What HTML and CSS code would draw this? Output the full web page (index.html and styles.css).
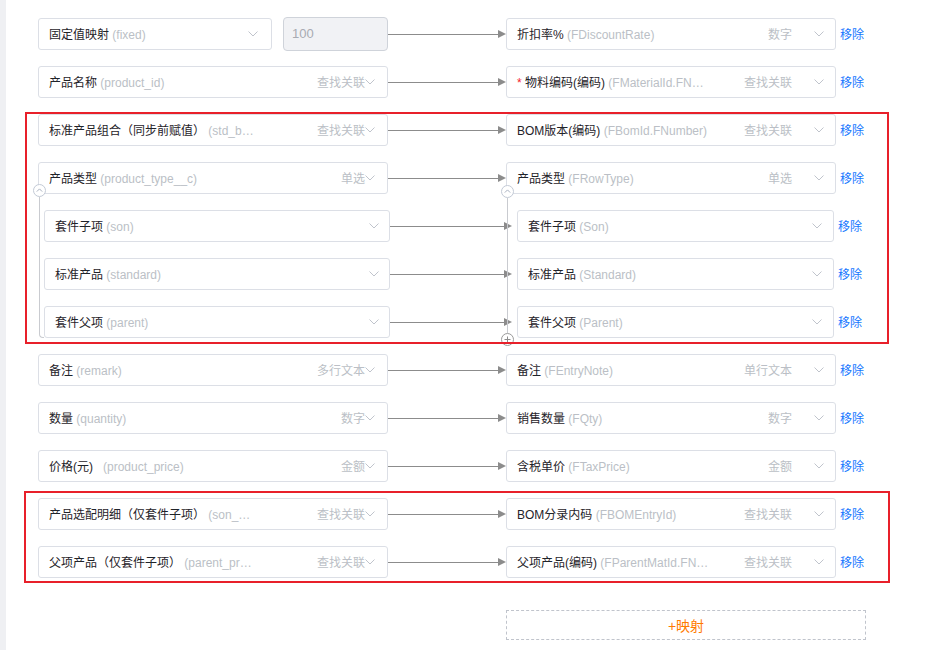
FILE: index.html
```html
<!DOCTYPE html>
<html lang="zh-CN">
<head>
<meta charset="utf-8">
<title>字段映射</title>
<link rel="stylesheet" href="styles.css">
</head>
<body>
<div class="page">
  <div class="mapping">

    <div class="row">
      <div class="src src-fixed">
        <div class="select sel-fixed"><span class="label">固定值映射 <span class="code">(fixed)</span></span><span class="fill"></span><svg class="chev" viewBox="0 0 10 6"><path d="M0.5 0.5 L5 5 L9.5 0.5"/></svg></div>
        <div class="input">100</div>
      </div>
      <div class="link"><i class="line"></i><i class="head"></i></div>
      <div class="select dst"><span class="label">折扣率% <span class="code">(FDiscountRate)</span></span><span class="fill"></span><span class="type">数字</span><svg class="chev" viewBox="0 0 10 6"><path d="M0.5 0.5 L5 5 L9.5 0.5"/></svg></div>
      <a class="remove">移除</a>
    </div>

    <div class="row">
      <div class="select src"><span class="label">产品名称 <span class="code">(product_id)</span></span><span class="fill"></span><span class="type">查找关联</span><svg class="chev" viewBox="0 0 10 6"><path d="M0.5 0.5 L5 5 L9.5 0.5"/></svg></div>
      <div class="link"><i class="line"></i><i class="head"></i></div>
      <div class="select dst"><span class="label"><span class="req">*</span> 物料编码(编码) <span class="code">(FMaterialId.FN…</span></span><span class="fill"></span><span class="type">查找关联</span><svg class="chev" viewBox="0 0 10 6"><path d="M0.5 0.5 L5 5 L9.5 0.5"/></svg></div>
      <a class="remove">移除</a>
    </div>

    <div class="mark mark-a">
      <div class="row">
        <div class="select src"><span class="label">标准产品组合（同步前赋值） <span class="code">(std_b…</span></span><span class="fill"></span><span class="type">查找关联</span><svg class="chev" viewBox="0 0 10 6"><path d="M0.5 0.5 L5 5 L9.5 0.5"/></svg></div>
        <div class="link"><i class="line"></i><i class="head"></i></div>
        <div class="select dst"><span class="label">BOM版本(编码) <span class="code">(FBomId.FNumber)</span></span><span class="fill"></span><span class="type">查找关联</span><svg class="chev" viewBox="0 0 10 6"><path d="M0.5 0.5 L5 5 L9.5 0.5"/></svg></div>
        <a class="remove">移除</a>
      </div>

      <div class="tree">
        <div class="row">
          <div class="select src"><span class="label">产品类型 <span class="code">(product_type__c)</span></span><span class="fill"></span><span class="type">单选</span><svg class="chev" viewBox="0 0 10 6"><path d="M0.5 0.5 L5 5 L9.5 0.5"/></svg></div>
          <div class="link"><i class="line"></i><i class="head"></i></div>
          <div class="select dst"><span class="label">产品类型 <span class="code">(FRowType)</span></span><span class="fill"></span><span class="type">单选</span><svg class="chev" viewBox="0 0 10 6"><path d="M0.5 0.5 L5 5 L9.5 0.5"/></svg></div>
          <a class="remove">移除</a>
        </div>

        <div class="row child">
          <div class="select src"><span class="label">套件子项 <span class="code">(son)</span></span><span class="fill"></span><svg class="chev" viewBox="0 0 10 6"><path d="M0.5 0.5 L5 5 L9.5 0.5"/></svg></div>
          <div class="link"><i class="line"></i><i class="head"></i></div>
          <div class="select dst"><span class="label">套件子项 <span class="code">(Son)</span></span><span class="fill"></span><svg class="chev" viewBox="0 0 10 6"><path d="M0.5 0.5 L5 5 L9.5 0.5"/></svg></div>
          <a class="remove">移除</a>
        </div>

        <div class="row child">
          <div class="select src"><span class="label">标准产品 <span class="code">(standard)</span></span><span class="fill"></span><svg class="chev" viewBox="0 0 10 6"><path d="M0.5 0.5 L5 5 L9.5 0.5"/></svg></div>
          <div class="link"><i class="line"></i><i class="head"></i></div>
          <div class="select dst"><span class="label">标准产品 <span class="code">(Standard)</span></span><span class="fill"></span><svg class="chev" viewBox="0 0 10 6"><path d="M0.5 0.5 L5 5 L9.5 0.5"/></svg></div>
          <a class="remove">移除</a>
        </div>

        <div class="row child">
          <div class="select src"><span class="label">套件父项 <span class="code">(parent)</span></span><span class="fill"></span><svg class="chev" viewBox="0 0 10 6"><path d="M0.5 0.5 L5 5 L9.5 0.5"/></svg></div>
          <div class="link"><i class="line"></i><i class="head"></i></div>
          <div class="select dst"><span class="label">套件父项 <span class="code">(Parent)</span></span><span class="fill"></span><svg class="chev" viewBox="0 0 10 6"><path d="M0.5 0.5 L5 5 L9.5 0.5"/></svg></div>
          <a class="remove">移除</a>
        </div>

        <span class="bracket-left"></span>
        <span class="bracket-right"></span>
        <span class="toggle toggle-left"><svg viewBox="0 0 13 13"><path d="M3.8 7.6 L6.5 4.9 L9.2 7.6"/></svg></span>
        <span class="toggle toggle-right"><svg viewBox="0 0 13 13"><path d="M3.8 7.6 L6.5 4.9 L9.2 7.6"/></svg></span>
        <span class="toggle add"><svg viewBox="0 0 13 13"><path d="M6.5 3.5 V9.5 M3.5 6.5 H9.5"/></svg></span>
      </div>
    </div>

    <div class="row">
      <div class="select src"><span class="label">备注 <span class="code">(remark)</span></span><span class="fill"></span><span class="type">多行文本</span><svg class="chev" viewBox="0 0 10 6"><path d="M0.5 0.5 L5 5 L9.5 0.5"/></svg></div>
      <div class="link"><i class="line"></i><i class="head"></i></div>
      <div class="select dst"><span class="label">备注 <span class="code">(FEntryNote)</span></span><span class="fill"></span><span class="type">单行文本</span><svg class="chev" viewBox="0 0 10 6"><path d="M0.5 0.5 L5 5 L9.5 0.5"/></svg></div>
      <a class="remove">移除</a>
    </div>

    <div class="row">
      <div class="select src"><span class="label">数量 <span class="code">(quantity)</span></span><span class="fill"></span><span class="type">数字</span><svg class="chev" viewBox="0 0 10 6"><path d="M0.5 0.5 L5 5 L9.5 0.5"/></svg></div>
      <div class="link"><i class="line"></i><i class="head"></i></div>
      <div class="select dst"><span class="label">销售数量 <span class="code">(FQty)</span></span><span class="fill"></span><span class="type">数字</span><svg class="chev" viewBox="0 0 10 6"><path d="M0.5 0.5 L5 5 L9.5 0.5"/></svg></div>
      <a class="remove">移除</a>
    </div>

    <div class="row">
      <div class="select src"><span class="label">价格(元)&nbsp;&nbsp; <span class="code">(product_price)</span></span><span class="fill"></span><span class="type">金额</span><svg class="chev" viewBox="0 0 10 6"><path d="M0.5 0.5 L5 5 L9.5 0.5"/></svg></div>
      <div class="link"><i class="line"></i><i class="head"></i></div>
      <div class="select dst"><span class="label">含税单价 <span class="code">(FTaxPrice)</span></span><span class="fill"></span><span class="type">金额</span><svg class="chev" viewBox="0 0 10 6"><path d="M0.5 0.5 L5 5 L9.5 0.5"/></svg></div>
      <a class="remove">移除</a>
    </div>

    <div class="mark mark-b">
      <div class="row">
        <div class="select src"><span class="label">产品选配明细（仅套件子项） <span class="code">(son_…</span></span><span class="fill"></span><span class="type">查找关联</span><svg class="chev" viewBox="0 0 10 6"><path d="M0.5 0.5 L5 5 L9.5 0.5"/></svg></div>
        <div class="link"><i class="line"></i><i class="head"></i></div>
        <div class="select dst"><span class="label">BOM分录内码 <span class="code">(FBOMEntryId)</span></span><span class="fill"></span><span class="type">查找关联</span><svg class="chev" viewBox="0 0 10 6"><path d="M0.5 0.5 L5 5 L9.5 0.5"/></svg></div>
        <a class="remove">移除</a>
      </div>
      <div class="row">
        <div class="select src"><span class="label">父项产品（仅套件子项） <span class="code">(parent_pr…</span></span><span class="fill"></span><span class="type">查找关联</span><svg class="chev" viewBox="0 0 10 6"><path d="M0.5 0.5 L5 5 L9.5 0.5"/></svg></div>
        <div class="link"><i class="line"></i><i class="head"></i></div>
        <div class="select dst"><span class="label">父项产品(编码) <span class="code">(FParentMatId.FN…</span></span><span class="fill"></span><span class="type">查找关联</span><svg class="chev" viewBox="0 0 10 6"><path d="M0.5 0.5 L5 5 L9.5 0.5"/></svg></div>
        <a class="remove">移除</a>
      </div>
    </div>

    <div class="add-row"><button class="add-btn">+映射</button></div>
  </div>
</div>
</body>
</html>
```

FILE: styles.css
```css
html, body {
  margin: 0;
  padding: 0;
  background: #ffffff;
}

body {
  font-family: "Liberation Sans", "Noto Sans CJK SC", sans-serif;
  font-size: 12px;
  color: #1f2329;
}

.page {
  min-height: 650px;
  border-left: 6px solid #eff0f3;
  box-sizing: border-box;
  padding: 18px 0 0 32px;
}

.mapping {
  display: flex;
  flex-direction: column;
  align-items: flex-start;
  gap: 16px;
}

.row {
  display: flex;
  align-items: center;
  height: 32px;
}

.select {
  box-sizing: border-box;
  height: 32px;
  display: flex;
  align-items: center;
  border: 1px solid #dcdfe6;
  border-radius: 3px;
  background: #fff;
  padding: 0 12px 2px 10px;
  white-space: nowrap;
  overflow: hidden;
}

.select .chev {
  margin-top: 2px;
}

.label {
  white-space: nowrap;
  color: #1f2329;
}

.code {
  color: #bbbfc6;
}

.req {
  color: #f5222d;
}

.fill {
  flex: 1;
}

.type {
  color: #bbbfc6;
}

.chev {
  width: 10px;
  height: 6px;
  flex: none;
}

.chev path {
  fill: none;
  stroke: #c0c4cc;
  stroke-width: 1;
}

.src {
  width: 350px;
  flex: none;
}

.src-fixed {
  display: flex;
  align-items: center;
  gap: 11px;
  border: none;
  padding: 0;
  height: 34px;
}

.sel-fixed {
  width: 234px;
  padding-right: 13px;
}

.input {
  box-sizing: border-box;
  width: 105px;
  height: 34px;
  border: 1px solid #cfd3da;
  border-radius: 4px;
  background: #f1f2f5;
  color: #a8abb2;
  font-size: 13px;
  display: flex;
  align-items: center;
  padding: 0 0 1px 8px;
}

.link {
  width: 118px;
  flex: none;
  display: flex;
  align-items: center;
  height: 10px;
}

.line {
  flex: 1;
  height: 1px;
  background: #8c8c8c;
}

.head {
  width: 0;
  height: 0;
  border-left: 8px solid #8c8c8c;
  border-top: 4px solid transparent;
  border-bottom: 4px solid transparent;
}

.dst {
  width: 330px;
  flex: none;
  padding-right: 11px;
}

.dst .type {
  margin-right: 22px;
}

.remove {
  margin-left: 4px;
  color: #1677ff;
  cursor: pointer;
  white-space: nowrap;
  padding-bottom: 1px;
}

/* nested children */
.child .src {
  width: 346px;
  margin-left: 6px;
  padding-right: 10px;
}

.child .link {
  width: 127px;
  padding-right: 5px;
  box-sizing: border-box;
}

.child .dst {
  width: 317px;
}

.tree {
  position: relative;
  display: flex;
  flex-direction: column;
  gap: 16px;
}

.bracket-left {
  position: absolute;
  left: 1px;
  top: 35px;
  width: 5px;
  height: 141px;
  border-left: 1px solid #c9cbd0;
  border-bottom: 1px solid #c9cbd0;
  border-bottom-left-radius: 4px;
  box-sizing: border-box;
}

.bracket-right {
  position: absolute;
  left: 469px;
  top: 36px;
  width: 1px;
  height: 135px;
  background: #c9cbd0;
}

.toggle {
  position: absolute;
  width: 13px;
  height: 13px;
  box-sizing: border-box;
  border: 1px solid #c3cad6;
  border-radius: 50%;
  background: #fff;
}

.toggle svg {
  position: absolute;
  left: -1px;
  top: -1px;
  width: 13px;
  height: 13px;
}

.toggle svg path {
  fill: none;
  stroke: #a9b1c0;
  stroke-width: 1;
}

.toggle-left {
  left: -5px;
  top: 22px;
}

.toggle-right {
  left: 463px;
  top: 23px;
}

.add {
  left: 463px;
  top: 171px;
  border-color: #9a9a9a;
}

.add svg path {
  stroke: #8c8c8c;
}

/* red annotation frames */
.mark {
  position: relative;
  display: flex;
  flex-direction: column;
  gap: 16px;
}

.mark::after {
  content: "";
  position: absolute;
  border: 2px solid #e8202a;
  pointer-events: none;
}

.mark-a::after {
  top: -2px;
  bottom: -6px;
  left: -13px;
  right: -25px;
}

.mark-b::after {
  top: -7px;
  bottom: -5px;
  left: -14px;
  right: -26px;
}

.add-row {
  padding-left: 468px;
  margin-top: 16px;
}

.add-btn {
  box-sizing: border-box;
  width: 360px;
  height: 30px;
  border: 1px dashed #c0c4cc;
  border-radius: 0;
  background: #fff;
  color: #ff7a00;
  font-family: "Liberation Sans", "Noto Sans CJK SC", sans-serif;
  font-size: 14px;
  padding: 0;
  cursor: pointer;
}
```
